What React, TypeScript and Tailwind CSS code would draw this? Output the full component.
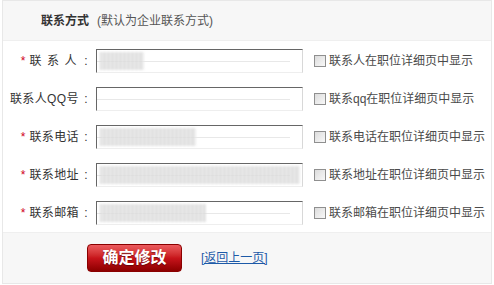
const font = { fontFamily: '"Liberation Sans", "Noto Sans CJK SC", sans-serif' }

type Row = {
  label: string
  required: boolean
  blur: number
  note: string
  spaced?: boolean
}

const rows: Row[] = [
  { label: '联系人', required: true, blur: 44, note: '联系人在职位详细页中显示', spaced: true },
  { label: '联系人QQ号', required: false, blur: 0, note: '联系qq在职位详细页中显示' },
  { label: '联系电话', required: true, blur: 96, note: '联系电话在职位详细页中显示' },
  { label: '联系地址', required: true, blur: 200, note: '联系地址在职位详细页中显示' },
  { label: '联系邮箱', required: true, blur: 106, note: '联系邮箱在职位详细页中显示' },
]

function FieldRow({ row }: { row: Row }) {
  return (
    <div className="flex h-[38px] items-center">
      <div className="flex w-[90px] items-center justify-end text-[12px] text-[#333] whitespace-nowrap">
        {row.required && <span className="mr-[4px] text-[#d0021b]">*</span>}
        <span className={row.spaced ? 'tracking-[5.5px] -mr-[3px]' : 'tracking-[0.4px]'}>{row.label}</span>
        <span className="inline-block w-[14px] text-center">:</span>
      </div>
      <div className="relative ml-[3px] h-[24px] w-[207px] border-t border-l border-t-[#666] border-l-[#666] border-r border-b border-r-[#d8d8d8] border-b-[#eee] bg-white overflow-hidden">
        <div className="absolute left-0 right-[12px] top-[11px] h-px bg-[#e8e8e8]" />
        {row.blur > 0 && (
          <div
            className="absolute left-[3px] top-[2px] h-[18px] bg-[repeating-linear-gradient(90deg,#c8c8c8_0px,#c8c8c8_1px,#e6e6e6_1px,#e6e6e6_4px)] blur-[0.8px] opacity-80"
            style={{ width: row.blur }}
          />
        )}
      </div>
      <label className="ml-[11px] flex items-center">
        <span className="inline-block h-[12px] w-[12px] border border-[#8f8f8f] bg-gradient-to-br from-[#dcdcdc] to-[#f8f8f8]" />
        <span className="ml-[3px] text-[12px] text-[#4a4a4a] whitespace-nowrap">{row.note}</span>
      </label>
    </div>
  )
}

export default function App() {
  return (
    <div className="h-[285px] w-[494px] bg-white" style={font}>
      <div className="mx-[2px] border border-[#e8e8e8]">
        <div className="flex h-[40px] items-center bg-[#f7f7f7] pl-[38px] border-b border-[#efefef]">
          <span className="text-[12px] font-bold text-[#333]">联系方式</span>
          <span className="ml-[8px] text-[12px] text-[#555]">(默认为企业联系方式)</span>
        </div>
        <div className="pt-[1px]">
          {rows.map((row) => (
            <FieldRow key={row.label} row={row} />
          ))}
        </div>
        <div className="flex h-[51px] items-center bg-[#f7f7f7] pl-[84px] border-t border-[#efefef]">
          <button className="h-[28px] w-[95px] rounded-[4px] border border-[#8a0000] bg-gradient-to-b from-[#ec5a5e] via-[#c8141b] to-[#8c0000] text-[16px] font-bold text-white [text-shadow:0_1px_1px_rgba(0,0,0,0.4)]">
            确定修改
          </button>
          <a href="#" className="ml-[19px] text-[12px] text-[#1d5aa8] underline">
            [返回上一页]
          </a>
        </div>
      </div>
    </div>
  )
}
